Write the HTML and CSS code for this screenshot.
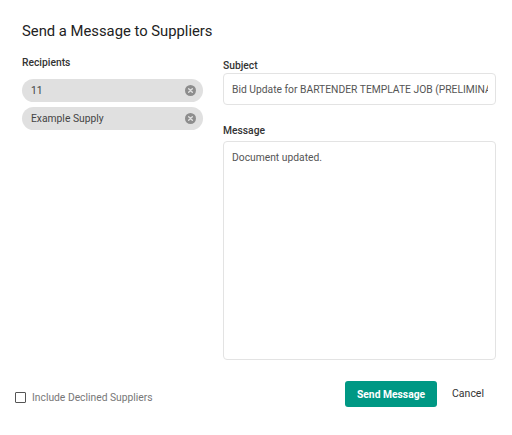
FILE: index.html
```html
<!DOCTYPE html>
<html>
<head>
<meta charset="utf-8">
<link rel="stylesheet" href="styles.css">
</head>
<body>
<div class="dialog">
  <h2 class="title">Send a Message to Suppliers</h2>
  <div class="body">
    <div class="col-left">
      <div class="label">Recipients</div>
      <div class="chips">
        <div class="chip"><span class="chip-text">11</span>
          <svg class="chip-x" viewBox="0 0 24 24"><circle cx="12" cy="12" r="12" fill="#8d8d8d"/><path d="M8 8 L16 16 M16 8 L8 16" stroke="#e0e0e0" stroke-width="3" stroke-linecap="round"/></svg>
        </div>
        <div class="chip"><span class="chip-text">Example Supply</span>
          <svg class="chip-x" viewBox="0 0 24 24"><circle cx="12" cy="12" r="12" fill="#8d8d8d"/><path d="M8 8 L16 16 M16 8 L8 16" stroke="#e0e0e0" stroke-width="3" stroke-linecap="round"/></svg>
        </div>
      </div>
    </div>
    <div class="col-right">
      <div class="label label-subject">Subject</div>
      <div class="input"><span class="input-text">Bid Update for BARTENDER TEMPLATE JOB (PRELIMINARY)</span></div>
      <div class="label label-message">Message</div>
      <div class="textarea">Document updated.</div>
    </div>
  </div>
  <div class="footer">
    <label class="check"><span class="box"></span><span class="check-label">Include Declined Suppliers</span></label>
    <div class="actions">
      <button class="btn-primary">Send Message</button>
      <button class="btn-text">Cancel</button>
    </div>
  </div>
</div>
</body>
</html>
```
FILE: styles.css
```css
html, body {
  margin: 0;
  padding: 0;
  background: #fff;
}
body {
  font-family: Roboto, "Liberation Sans", sans-serif;
  color: #333;
}
.dialog {
  width: 512px;
  height: 435px;
  box-sizing: border-box;
}
.title {
  margin: 0;
  padding: 21px 0 0 22px;
  font-size: 14.8px;
  line-height: 20px;
  font-weight: 400;
  color: #222;
}
.body {
  display: grid;
  grid-template-columns: 181px 273px;
  column-gap: 20px;
  padding: 0 16px 0 22px;
  margin-top: 15px;
}
.label {
  font-size: 10.3px;
  line-height: 14px;
  font-weight: 500;
  color: #333;
}
.chips {
  display: flex;
  flex-direction: column;
  gap: 5px;
  margin-top: 9px;
}
.chip {
  height: 23px;
  border-radius: 12px;
  background: #e0e0e0;
  display: flex;
  align-items: center;
  justify-content: space-between;
  padding: 0 7px 0 9px;
  font-size: 10.3px;
  color: #444;
}
.chip-x {
  width: 11px;
  height: 11px;
}
.col-right {
  padding-top: 3px;
}
.input {
  height: 32px;
  box-sizing: border-box;
  border: 1px solid #e3e3e3;
  border-radius: 4px;
  padding: 0 7px 0 8px;
  display: flex;
  align-items: center;
}
.input-text {
  display: block;
  white-space: nowrap;
  overflow: hidden;
  font-size: 10.3px;
  color: #555;
}
.label-message {
  margin-top: 19px;
}
.textarea {
  margin-top: 3px;
  height: 219px;
  box-sizing: border-box;
  border: 1px solid #e3e3e3;
  border-radius: 4px;
  padding: 9px 8px;
  font-size: 10.3px;
  line-height: 14px;
  color: #555;
}
.footer {
  display: flex;
  align-items: center;
  justify-content: space-between;
  padding: 0 28px 0 15px;
  margin-top: 21px;
}
.check {
  display: flex;
  align-items: center;
  margin-top: 6px;
}
.box {
  width: 9px;
  height: 9px;
  border: 1.5px solid #555;
  border-radius: 1px;
}
.check-label {
  margin-left: 6px;
  font-size: 10.3px;
  color: #777;
}
.actions {
  display: flex;
  align-items: center;
}
.btn-primary {
  width: 92px;
  height: 26px;
  border: none;
  border-radius: 3px;
  background: #009884;
  color: #fff;
  font-family: inherit;
  font-size: 10.3px;
  font-weight: 700;
  padding: 0;
}
.btn-text {
  margin-left: 15px;
  border: none;
  background: none;
  padding: 0;
  font-family: inherit;
  font-size: 10.5px;
  color: #333;
  margin-top: -2px;
}
```
